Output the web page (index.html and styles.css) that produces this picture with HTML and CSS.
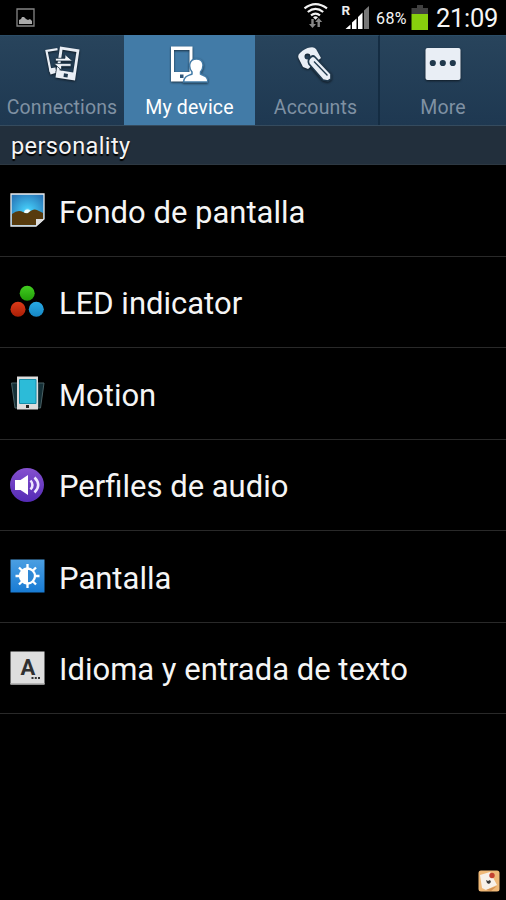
FILE: index.html
```html
<!DOCTYPE html>
<html lang="es">
<head>
<meta charset="utf-8">
<title>Settings</title>
<link rel="stylesheet" href="styles.css">
</head>
<body>
<header class="status">
  <svg class="notice" width="20" height="20" viewBox="0 0 20 20"><path d="M1 1h17v17H1z" fill="none" stroke="#858585" stroke-width="1.3"/><path d="M3 16v-4l2-1 1-2h2l2 2 2 1 2-1 2 2v3z" fill="#aaa"/></svg>
  <svg class="signals" width="68" height="35" viewBox="0 0 68 35">
    <g fill="none" stroke="#f2f2f2" stroke-width="2.2"><path d="M1.500 8.400Q12.500-.2 24 8.400"/><path d="M4.800 12Q12.500 5.600 20.200 12"/><path d="M8 15.400Q12.500 11.800 17 15.400"/></g>
    <path d="M10 17.200q2.500-2 5 0l-2.500 2.600z" fill="#f2f2f2"/>
    <path d="M8.300 19v5H6l3.500 4 3.500-4h-2.300v-5zM14.500 27v-5h-2.300l3.500-4 3.500 4h-2.300v5z" fill="#888"/>
    <text class="roaming" x="38.500" y="15">R</text>
    <path d="M42.500 29l5-4.500V29zM49 29v-6.500l4.500-4V29zM55 29V17l4.500-4.500V29z" fill="#fff"/>
    <path d="M61 29V10.500l5-4.500v23z" fill="#777"/>
  </svg>
  <span class="percent">68%</span>
  <svg class="battery" width="18" height="26" viewBox="0 0 18 26"><path d="M6 0h6v3h5v6H.500V3H6z" fill="#404040"/><path d="M.500 9H17v16H.500z" fill="#87cf0d"/></svg>
  <time class="clock">21:09</time>
</header>
<nav class="tabs">
  <a class="tab connections">
    <svg width="40" height="40" viewBox="0 0 40 40"><path d="M15.500 4.200L4.500 6l4 20 5-1" fill="none" stroke="#e9eef5" stroke-width="2.200"/><path d="M7 23.500l6.500-1v5.500l-5 1.500z" fill="#e9eef5"/><path fill-rule="evenodd" d="M18 1.500L37.500 4.500l-4.500 31-19.500-3zM20.500 4.800L17.500 25.200l13.700 2.200 3.200-20.500z" fill="#e9eef5"/><path d="M22 28.300l4 .6-.5 3.600-4-.6z" fill="#20384c"/><path d="M13.500 13.300h9.500v-3.800l7.500 6.500h-17zM29 21.300H19.500v3.800L12 18.600h17z" fill="#f4f6fa" stroke="#20384c" stroke-width=".8"/></svg>
    <span>Connections</span>
  </a>
  <a class="tab device active">
    <svg width="40" height="40" viewBox="0 0 40 40"><path fill-rule="evenodd" d="M3 1.500h21.500v35H3zM6 5v22h15.500V5z" fill="#fff"/><path d="M12 29.500h3.500V33H12z" fill="#31577a"/><path d="M15.500 37c1-6 4-6 8.500-8v-2c-4-5-3-13 4.500-13s8 8 4 13v2c4 2 7 2 7.500 8z" fill="#fff" stroke="#427ba7" stroke-width="1.500"/></svg>
    <span>My device</span>
  </a>
  <a class="tab accounts">
    <svg width="40" height="40" viewBox="0 0 40 40"><path fill-rule="evenodd" d="M4.500 13Q3.500 10 6 8Q11 3 16 2.500q4-1 6 1.500l5 9-13 11-5-2zM13.500 8.500a3 3 0 100 6 3 3 0 000-6z" fill="#e9eef5"/><path d="M21 12l16 17v5l-3 2-5-1-14-16q-2-4 2-7 2-2 4 0z" fill="#e9eef5" stroke="#20384c" stroke-width="1.700"/><path d="M20 16.500l13.500 14" stroke="#20384c" stroke-width="1.300"/></svg>
    <span>Accounts</span>
  </a>
  <a class="tab more">
    <svg width="40" height="40" viewBox="0 0 40 40"><rect x="2.500" y="3" width="35" height="32" rx="2" fill="#e9eef5"/><g fill="#20384c"><circle cx="9.800" cy="18" r="3.100"/><circle cx="19.800" cy="18" r="3.100"/><circle cx="29.800" cy="18" r="3.100"/></g></svg>
    <span>More</span>
  </a>
</nav>
<h1 class="section"><span>personality</span></h1>
<main class="list">
  <div class="row"><svg width="36" height="36" viewBox="0 0 36 36"><defs><radialGradient id="sky" cx=".5" cy=".55" r=".65"><stop stop-color="#bdf6ff"/><stop offset=".18" stop-color="#43c7f4"/><stop offset="1" stop-color="#2774b6"/></radialGradient></defs><path d="M1 1h33v25l-8 7H1z" fill="url(#sky)" stroke="#eee" stroke-width="1.300"/><path d="M14 20a3.500 3.500 0 017 0z" fill="#effeff"/><path d="M2 21q6-5 11-2 3 2 5 1 6-6 11-2l4 2v6l-7 6H2z" fill="#573b0e"/><path d="M26 33v-7h8z" fill="#ddd"/></svg><span class="label">Fondo de pantalla</span></div>
  <div class="row"><svg width="36" height="36" viewBox="0 0 36 36"><defs><linearGradient id="green" x2="0" y2="1"><stop stop-color="#42cd20"/><stop offset="1" stop-color="#219c08"/></linearGradient><linearGradient id="red" x2="0" y2="1"><stop stop-color="#dc3b19"/><stop offset="1" stop-color="#a91e06"/></linearGradient><linearGradient id="blue" x2="0" y2="1"><stop stop-color="#28aae5"/><stop offset="1" stop-color="#1686c3"/></linearGradient></defs><circle cx="17.200" cy="8.300" r="7.500" fill="url(#green)"/><circle cx="8" cy="24.300" r="7.500" fill="url(#red)"/><circle cx="26.300" cy="24.300" r="7.500" fill="url(#blue)"/></svg><span class="label">LED indicator</span></div>
  <div class="row"><svg width="36" height="36" viewBox="0 0 36 36"><path d="M1.500 7h6v25h-2.500zM34 7h-6v25h2.500z" fill="#142f36" stroke="#496064"/><path d="M7 .500h21v33H7z" fill="#ddd"/><path d="M9.500 3.500H26v24H9.500z" fill="#2cbbd8" stroke="#168eaa"/><rect x="16" y="29" width="3" height="3" fill="#222"/></svg><span class="label">Motion</span></div>
  <div class="row"><svg width="36" height="36" viewBox="0 0 36 36"><defs><linearGradient id="purple" x2="0" y2="1"><stop stop-color="#8550cf"/><stop offset="1" stop-color="#542bb5"/></linearGradient></defs><circle cx="17" cy="17" r="17" fill="url(#purple)"/><path d="M5 12h5.500L18 7v20l-7.500-5H5z" fill="#fff"/><path d="M20.500 12.500q4 4.500 0 9M24.500 9.500q7.500 7.500 0 15" fill="none" stroke="#eee6ff" stroke-width="2.500"/></svg><span class="label">Perfiles de audio</span></div>
  <div class="row"><svg width="36" height="36" viewBox="0 0 36 36"><defs><linearGradient id="azure" x2="0" y2="1"><stop stop-color="#4b9fe2"/><stop offset="1" stop-color="#187bd4"/></linearGradient></defs><path d="M.500.500h34v33H.500z" fill="url(#azure)"/><path d="M17.500 5v5M17.500 24v5M5.500 17h5M24.500 17h5M9 8.500l4 4M22 21.500l4 4M26 8.500l-4 4M13 21.500l-4 4" stroke="#fff" stroke-width="2.300"/><circle cx="17.500" cy="17" r="7.500" fill="#2f88d5" stroke="#fff" stroke-width="2.300"/><path d="M18 9.500a7.500 7.500 0 000 15z" fill="#fff"/></svg><span class="label">Pantalla</span></div>
  <div class="row"><svg width="36" height="36" viewBox="0 0 36 36"><path d="M.500.500h34v33H.500z" fill="#dedede"/><path d="M.500 32h34v1.500H.500z" fill="#b5b5b5"/><text class="letter" x="18" y="23.500">A</text><path d="M21.500 26h2v2h-2zM24.800 26h2v2h-2zM28 26h2v2h-2z" fill="#333"/></svg><span class="label">Idioma y entrada de texto</span></div>
</main>
<footer class="footer"><svg width="22" height="22" viewBox="0 0 22 22"><rect x=".5" y=".5" width="21" height="21" rx="2.500" fill="#efb978"/><path d="M2 5l10-3 7 13-11 5-4-2z" fill="#f7f1e9"/><path d="M19 16L8 20l5 1z" fill="#d49354"/><circle cx="14" cy="5.500" r="2.700" fill="#c44130"/><path d="M8 10l2 1 2-1 1 2-2 2-2-1z" fill="#383838"/></svg></footer>
</body>
</html>
```

FILE: styles.css
```css
* { box-sizing: border-box; }
body { margin: 0; width: 506px; height: 900px; background: #000; color: #f5f5f5; font-family: Roboto, "Liberation Sans", sans-serif; display: flex; flex-direction: column; overflow: hidden; }
svg { display: block; flex: none; }
.status { height: 35px; flex: none; display: flex; align-items: center; padding: 0 8px 0 16px; }
.signals { margin-left: 267px; }
.roaming { font-size: 13.5px; font-weight: 700; fill: #eee; }
.percent { width: 33px; margin-left: 5px; padding-top: 1px; font-size: 16px; letter-spacing: .4px; white-space: nowrap; }
.battery { margin-left: 3px; }
.clock { margin-left: 7px; font-size: 25.5px; white-space: nowrap; letter-spacing: -.3px; }
.tabs { height: 91px; flex: none; display: grid; grid-template-columns: 124px 131px 125px 126px; border-bottom: 1px solid #354b5e; background: linear-gradient(#28445c, #1e3851); }
.tab { display: flex; flex-direction: column; align-items: center; padding-top: 9px; color: #7f91a3; font-size: 19.5px; letter-spacing: .15px; border-top: 1px solid #2b4d67; }
.tab svg { filter: drop-shadow(0 1px 1px #0009); }
.tab span { margin-top: 11px; line-height: 23px; white-space: nowrap; }
.device svg { margin-right: 4px; }
.accounts svg { margin-right: 6px; }
.accounts span { margin-right: 2px; }
.active { background: #427ba7; color: #fff; border-color: #427ba7; }
.accounts { border-right: 2px solid #142c42; }
.section { margin: 0; height: 39px; flex: none; padding-left: 11px; background: #222f3c; border-bottom: 1px solid #2d3842; font-size: 23.5px; letter-spacing: .4px; line-height: 41px; font-weight: 400; text-shadow: 0 2px 1px #000; }
.list { height: 549px; flex: none; display: grid; grid-template-rows: repeat(6, 1fr); }
.row { display: flex; align-items: center; gap: 13px; padding: 2px 0 0 10px; border-bottom: 1px solid #292929; }
.label { font-size: 31px; line-height: 40px; white-space: nowrap; margin-top: 3px; }
.letter { font-size: 22px; font-weight: 700; fill: #303030; text-anchor: middle; }
.footer { margin-top: auto; padding: 0 6px 8px 0; display: flex; justify-content: flex-end; }
```
